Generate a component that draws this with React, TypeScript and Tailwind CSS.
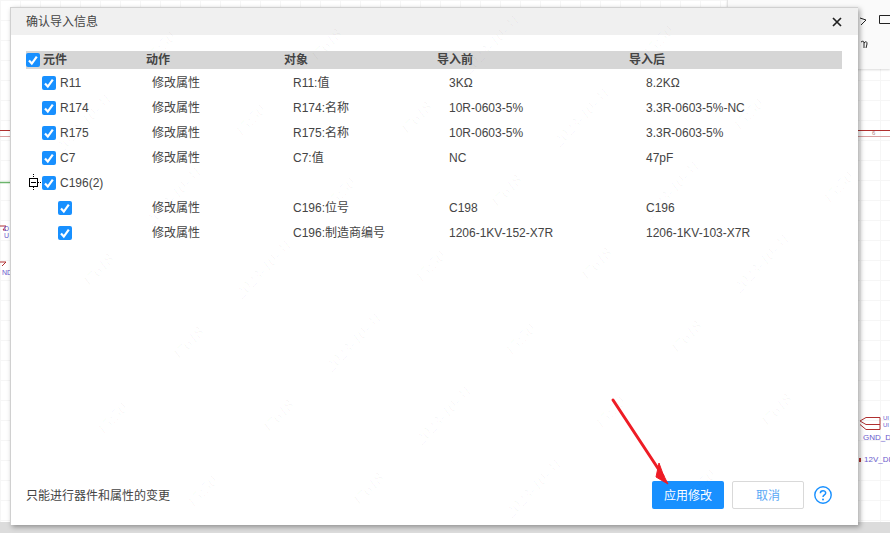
const rows = [
  { name: "R11", target: "R11:值", before: "3KΩ", after: "8.2KΩ" },
  { name: "R174", target: "R174:名称", before: "10R-0603-5%", after: "3.3R-0603-5%-NC" },
  { name: "R175", target: "R175:名称", before: "10R-0603-5%", after: "3.3R-0603-5%" },
  { name: "C7", target: "C7:值", before: "NC", after: "47pF" },
];

const subRows = [
  { target: "C196:位号", before: "C198", after: "C196" },
  { target: "C196:制造商编号", before: "1206-1KV-152-X7R", after: "1206-1KV-103-X7R" },
];

// watermark repeats along a diagonal lattice
const marks = ["J7618", "2023-10-31", "15:50"];
const watermarks: { x: number; y: number; text: string }[] = [];
for (let i = -6; i < 9; i++) {
  for (let j = -6; j < 9; j++) {
    const x = 278 + i * 76 + j * 90;
    const y = 417 - i * 75 + j * 73;
    if (x > 40 && x < 850 && y > 40 && y < 495) {
      watermarks.push({ x, y, text: marks[((i % 3) + 3) % 3] });
    }
  }
}

function Check() {
  return (
    <span className="flex h-[14px] w-[14px] shrink-0 items-center justify-center rounded-[2px] bg-[#1890ff]">
      <svg width="14" height="14" viewBox="0 0 14 14" fill="none">
        <path d="M3 7.6 L5.8 10.6 L10.8 3.6" stroke="#fff" strokeWidth="2.2" />
      </svg>
    </span>
  );
}

function TreeToggle() {
  return (
    <svg width="16" height="25" viewBox="0 0 16 25" className="shrink-0">
      <path d="M7.5 4 V8 M7.5 17 V21 M12 12.5 H16" stroke="#000" strokeWidth="1" strokeDasharray="1 1" fill="none" />
      <rect x="3.5" y="8.5" width="8" height="8" fill="#fff" stroke="#000" />
      <path d="M5 12.5 H10" stroke="#000" />
    </svg>
  );
}

function Row({ first, target, before, after }: { first: React.ReactNode; target?: string; before?: string; after?: string }) {
  return (
    <div className="grid h-[25px] grid-cols-[120px_138px_153px_192px_213px] items-center text-[#444]">
      <div className="flex items-center">{first}</div>
      <div className="pl-[6px]">{target ? "修改属性" : ""}</div>
      <div className="pl-[9px]">{target}</div>
      <div className="pl-[12px]">{before}</div>
      <div className="pl-[17px]">{after}</div>
    </div>
  );
}

export default function App() {
  return (
    <div
      className="relative h-[533px] w-[890px] overflow-hidden bg-white text-[12px] bg-[linear-gradient(to_right,#f6f6f6_1px,transparent_1px),linear-gradient(to_bottom,#f6f6f6_1px,transparent_1px)] bg-[size:20px_20px]"
      style={{ fontFamily: '"Liberation Sans", "Noto Sans CJK SC", sans-serif' }}
    >
      {/* top right panel of the editor behind */}
      <div className="absolute right-0 top-0 h-[69px] w-[163px] border-l border-[#e4e4e4] bg-[#fafafa] shadow-[0_1px_2px_rgba(0,0,0,0.15)]" />
      <div className="absolute inset-x-0 bottom-0 h-[11px] bg-[#dcdcdc]" />

      {/* schematic bits peeking out */}
      <svg className="absolute left-0 top-0" width="890" height="533" viewBox="0 0 890 533" fill="none">
        <path d="M0 130.5 H10 M858 130.5 H890" stroke="#b03030" />
        <path d="M0 136.5 H10 M858 136.5 H890" stroke="#d9a0a0" />
        <path d="M0 182.5 H10" stroke="#6db56d" strokeWidth="1.5" />
        <path d="M0 226 H6 L3 230 H6 M0 262 H6 L2 266" stroke="#b03030" />
        <path d="M880 417.5 H866 L860 421 L866 424.5 H880 V417.5 M880 424.5 V429.5 H866 L860 424.5" stroke="#b03030" />
        <path d="M860 458 V462" stroke="#b03030" strokeWidth="2" />
        <path d="M860 18 L866 20 L861 25" stroke="#222" />
        <path d="M879.5 15.5 H890 M879.5 15.5 V23.5 H890" stroke="#222" />
        <path d="M861 42 Q864 40 864 43 V48 M864 43 Q867 40 867 44 L866 48" stroke="#222" />
      </svg>
      <span className="absolute left-[4px] top-[224px] text-[7px] leading-[9px] text-[#6a5acd]">D</span>
      <span className="absolute left-[4px] top-[231px] text-[7px] leading-[9px] text-[#6a5acd]">U</span>
      <span className="absolute left-[2px] top-[268px] text-[7px] leading-[9px] text-[#6a5acd]">ND</span>
      <span className="absolute left-[883px] top-[414px] text-[6px] leading-[8px] text-[#6a5acd]">UI</span>
      <span className="absolute left-[883px] top-[421px] text-[6px] leading-[8px] text-[#6a5acd]">UI</span>
      <span className="absolute left-[863px] top-[432px] text-[8px] leading-[12px] text-[#6a5acd]">GND_D</span>
      <span className="absolute left-[864px] top-[454px] text-[8px] leading-[12px] text-[#6a5acd]">12V_DI</span>
      <span className="absolute left-[872px] top-[129px] text-[6px] leading-[8px] text-[#b08080]">6</span>

      {/* dialog */}
      <div className="relative ml-[10px] flex h-[525px] w-[848px] flex-col pt-[7px]">
        <div className="flex h-full flex-col overflow-hidden border-t border-l border-[#d0d0d0] bg-white shadow-[2px_2px_5px_rgba(0,0,0,0.35)]">
          <div className="flex h-[27px] shrink-0 items-center justify-between bg-[#f0f0f0] pl-[15px] pr-[16px] text-[#444]">
            <span>确认导入信息</span>
            <svg width="10" height="10" viewBox="0 0 10 10" fill="none">
              <path d="M1 1 L9 9 M9 1 L1 9" stroke="#222" strokeWidth="1.7" />
            </svg>
          </div>

          <div className="flex flex-1 flex-col pl-[15px] pr-[16px] pt-[16px]">
            <div className="mb-[1px] grid h-[18px] grid-cols-[120px_138px_153px_192px_213px] items-center bg-[#d6d6d6] font-bold text-[#444]">
              <div className="flex items-center gap-[3px]">
                <Check />
                <span>元件</span>
              </div>
              <div>动作</div>
              <div>对象</div>
              <div>导入前</div>
              <div>导入后</div>
            </div>

            {rows.map((r) => (
              <Row
                key={r.name}
                first={
                  <div className="flex items-center gap-[4px] pl-[16px]">
                    <Check />
                    <span>{r.name}</span>
                  </div>
                }
                target={r.target}
                before={r.before}
                after={r.after}
              />
            ))}

            <Row
              first={
                <div className="flex items-center">
                  <TreeToggle />
                  <Check />
                  <span className="ml-[4px]">C196(2)</span>
                </div>
              }
            />

            {subRows.map((r) => (
              <Row
                key={r.target}
                first={
                  <div className="pl-[32px]">
                    <Check />
                  </div>
                }
                target={r.target}
                before={r.before}
                after={r.after}
              />
            ))}

            <div className="mt-auto mb-[16px] flex items-center justify-between">
              <span className="pt-[2px] text-[#444]">只能进行器件和属性的变更</span>
              <div className="flex items-center">
                <button className="h-[28px] w-[72px] rounded-[2px] bg-[#1890ff] pt-[2px] text-white">应用修改</button>
                <button className="ml-[8px] h-[28px] w-[72px] rounded-[2px] border border-[#d9d9d9] bg-white pt-[2px] text-[#5aa9f5]">取消</button>
                <svg className="ml-[10px] mr-[10px]" width="18" height="18" viewBox="0 0 18 18" fill="none">
                  <circle cx="9" cy="9" r="8.2" stroke="#1890ff" strokeWidth="1.4" />
                  <path d="M6.4 7.2 C6.4 3.9 11.7 4.1 11.7 7 C11.7 9 9 8.9 9 11" stroke="#1890ff" strokeWidth="1.5" />
                  <circle cx="9" cy="13.4" r="1" fill="#1890ff" />
                </svg>
              </div>
            </div>
          </div>
        </div>
      </div>

      {/* watermark */}
      {watermarks.map((w) => (
        <span
          key={`${w.x}-${w.y}`}
          className="pointer-events-none absolute whitespace-nowrap text-[16px] text-black/[0.03] italic"
          style={{
            left: w.x,
            top: w.y,
            fontFamily: '"Liberation Serif", serif',
            transform: "translate(-50%, -50%) rotate(-47deg)",
          }}
        >
          {w.text}
        </span>
      ))}

      {/* annotation arrow */}
      <svg className="pointer-events-none absolute left-0 top-0" width="890" height="533" viewBox="0 0 890 533" fill="none">
        <path d="M613 400 L663 476" stroke="#ee1c25" strokeWidth="3" strokeLinecap="round" />
        <path d="M668 484 L656 477 L659 463 L663 474 Z" fill="#ee1c25" stroke="#ee1c25" strokeWidth="1" />
      </svg>
    </div>
  );
}
